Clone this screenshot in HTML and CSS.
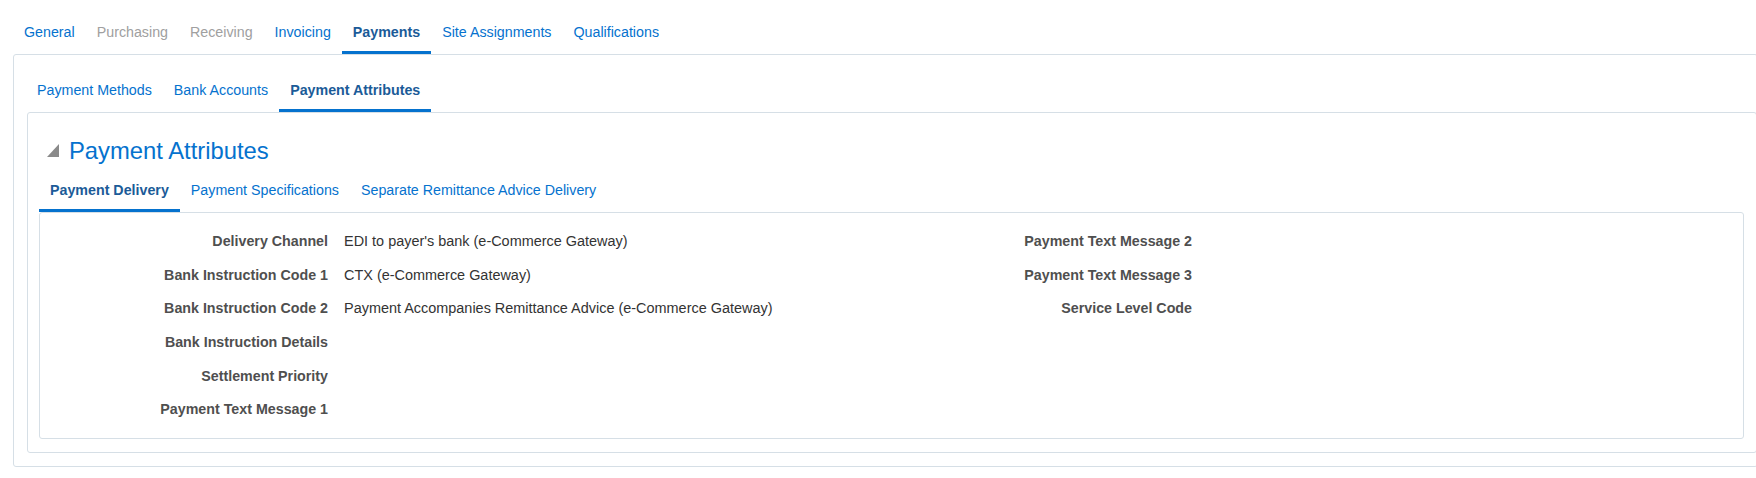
FILE: index.html
```html
<!DOCTYPE html>
<html lang="en">
<head>
<meta charset="utf-8">
<title>Payments - Payment Attributes</title>
<link rel="stylesheet" href="styles.css">
</head>
<body>
  <nav class="tabs tabs-top">
    <span class="tab">General</span>
    <span class="tab disabled">Purchasing</span>
    <span class="tab disabled">Receiving</span>
    <span class="tab">Invoicing</span>
    <span class="tab selected">Payments</span>
    <span class="tab">Site Assignments</span>
    <span class="tab">Qualifications</span>
  </nav>
  <div class="outer">
    <nav class="tabs tabs-second">
      <span class="tab">Payment Methods</span>
      <span class="tab">Bank Accounts</span>
      <span class="tab selected">Payment Attributes</span>
    </nav>
    <section class="panel">
      <h2 class="heading">
        <svg class="disclosure" width="12" height="13" viewBox="0 0 12 13" aria-hidden="true"><polygon points="12,0 12,13 0,13" fill="#8a8a8a"/></svg>
        <span>Payment Attributes</span>
      </h2>
      <nav class="tabs tabs-third">
        <span class="tab selected">Payment Delivery</span>
        <span class="tab">Payment Specifications</span>
        <span class="tab">Separate Remittance Advice Delivery</span>
      </nav>
      <div class="details">
        <div class="col col-left">
          <div class="label">Delivery Channel</div><div class="value">EDI to payer's bank (e-Commerce Gateway)</div>
          <div class="label">Bank Instruction Code 1</div><div class="value">CTX (e-Commerce Gateway)</div>
          <div class="label">Bank Instruction Code 2</div><div class="value">Payment Accompanies Remittance Advice (e-Commerce Gateway)</div>
          <div class="label">Bank Instruction Details</div><div class="value"></div>
          <div class="label">Settlement Priority</div><div class="value"></div>
          <div class="label">Payment Text Message 1</div><div class="value"></div>
        </div>
        <div class="col col-right">
          <div class="label">Payment Text Message 2</div><div class="value"></div>
          <div class="label">Payment Text Message 3</div><div class="value"></div>
          <div class="label">Service Level Code</div><div class="value"></div>
        </div>
      </div>
    </section>
  </div>
</body>
</html>
```
FILE: styles.css
```css
html, body {
  margin: 0;
  padding: 0;
  overflow: hidden;
  background: #ffffff;
}

body {
  font-family: "Liberation Sans", Arial, Helvetica, sans-serif;
  font-size: 14.25px;
  color: #333333;
}

.tabs {
  display: flex;
  align-items: flex-end;
}

.tab {
  display: block;
  padding: 0 11px 10px;
  line-height: 17px;
  color: #0572ce;
  border-bottom: 3px solid transparent;
  white-space: nowrap;
}

.tab.disabled {
  color: #a0a0a0;
}

.tab.selected {
  font-weight: bold;
  color: #1b5b98;
  border-bottom-color: #0572ce;
}

.tabs-top {
  padding-left: 13px;
}

.tabs-top .tab {
  padding-top: 24px;
}

.outer {
  width: 1745px;
  box-sizing: border-box;
  margin-left: 13px;
  border: 1px solid #d6dfe6;
  border-radius: 3px;
  padding: 0 0 13px 13px;
}

.tabs-second {
  margin-left: -1px;
}

.tabs-second .tab {
  padding-top: 27px;
}

.panel {
  border: 1px solid #d6dfe6;
  border-radius: 3px;
  padding: 24px 12px 13px 11px;
}

.heading {
  display: flex;
  align-items: center;
  gap: 10px;
  margin: 0 0 0 8px;
  height: 28px;
  font-size: 23.8px;
  font-weight: normal;
  line-height: 28px;
  color: #0572ce;
}

.disclosure {
  display: block;
  flex: none;
  margin-top: -1px;
}

.tabs-third .tab {
  padding-top: 17px;
}

.details {
  display: flex;
  border: 1px solid #d6dfe6;
  border-radius: 3px;
  padding: 12px 0 11px 0;
}

.col {
  display: grid;
  grid-template-columns: 288px 1fr;
  grid-auto-rows: 33.6px;
  column-gap: 16px;
  align-items: center;
}

.col-left {
  width: 864px;
  flex: none;
}

.col-right {
  flex: 1;
  align-self: flex-start;
}

.label {
  text-align: right;
  font-weight: bold;
  color: #4f4f4f;
  line-height: 17px;
  white-space: nowrap;
}

.value {
  font-size: 14.45px;
  color: #333333;
  line-height: 17px;
  white-space: nowrap;
}
```
